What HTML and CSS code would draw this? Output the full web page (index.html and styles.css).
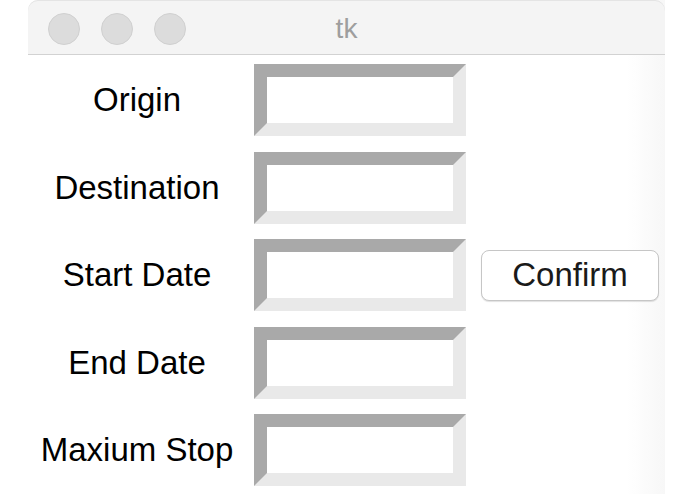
FILE: index.html
```html
<!DOCTYPE html>
<html lang="en">
<head>
  <meta charset="UTF-8" />
  <title>tk</title>
  <link rel="stylesheet" href="styles.css">
</head>
<body>
  <div class="window">
    <div class="titlebar">
      <div class="lights">
        <span class="light"></span>
        <span class="light"></span>
        <span class="light"></span>
      </div>
      <div class="title">tk</div>
    </div>

    <div class="form">
      <label class="label" for="origin">Origin</label>
      <input class="entry" id="origin" type="text" />

      <label class="label" for="dest">Destination</label>
      <input class="entry" id="dest" type="text" />

      <label class="label" for="start">Start Date</label>
      <input class="entry" id="start" type="text" />
      <button class="confirm">Confirm</button>

      <label class="label" for="end">End Date</label>
      <input class="entry" id="end" type="text" />

      <label class="label" for="stops">Maxium Stop</label>
      <input class="entry" id="stops" type="text" />
    </div>
  </div>
</body>
</html>
```

FILE: styles.css
```css
body {
  margin: 0;
  background: #fff;
  font-family: "Liberation Sans", Arial, sans-serif;
  overflow: hidden;
}

.window {
  margin-left: 28px;
  width: 637px;
  height: 494px;
  background: linear-gradient(to right, #fff 0%, #fff 94%, #f7f7f7 100%);
}

.titlebar {
  position: relative;
  height: 54px;
  background: #f4f4f4;
  border-bottom: 1px solid #d2d2d2;
  border-radius: 10px 10px 0 0;
  box-shadow: inset 0 1px 0 #e4e4e4;
}

.lights {
  display: flex;
  gap: 21px;
  padding: 13px 0 0 20px;
}

.light {
  width: 30px;
  height: 30px;
  border-radius: 50%;
  background: #dcdcdc;
  border: 1px solid #d0d0d0;
}

.title {
  position: absolute;
  left: 0;
  right: 0;
  top: 13px;
  text-align: center;
  font-size: 28px;
  color: #9e9e9e;
}

.form {
  display: grid;
  grid-template-columns: 218px 212px 178px;
  grid-auto-rows: 72px;
  column-gap: 8px;
  row-gap: 15.5px;
  padding-top: 9px;
}

.label {
  grid-column: 1;
  align-self: center;
  text-align: center;
  font-size: 33px;
  color: #000;
}

.entry {
  grid-column: 2;
  box-sizing: border-box;
  width: 212px;
  height: 72px;
  margin: 0;
  border-style: solid;
  border-width: 13px;
  border-color: #a9a9a9 #e9e9e9 #e9e9e9 #a9a9a9;
  background: #fff;
  outline: none;
}

.confirm {
  grid-column: 3;
  grid-row: 3;
  align-self: center;
  margin-left: 7px;
  height: 51px;
  width: 178px;
  background: #fff;
  border: 1px solid #c6c6c6;
  border-radius: 8px;
  box-shadow: 0 1px 1px rgba(0, 0, 0, 0.12);
  font-family: "Liberation Sans", Arial, sans-serif;
  font-size: 33px;
  color: #1a1a1a;
  padding: 0;
}
```
